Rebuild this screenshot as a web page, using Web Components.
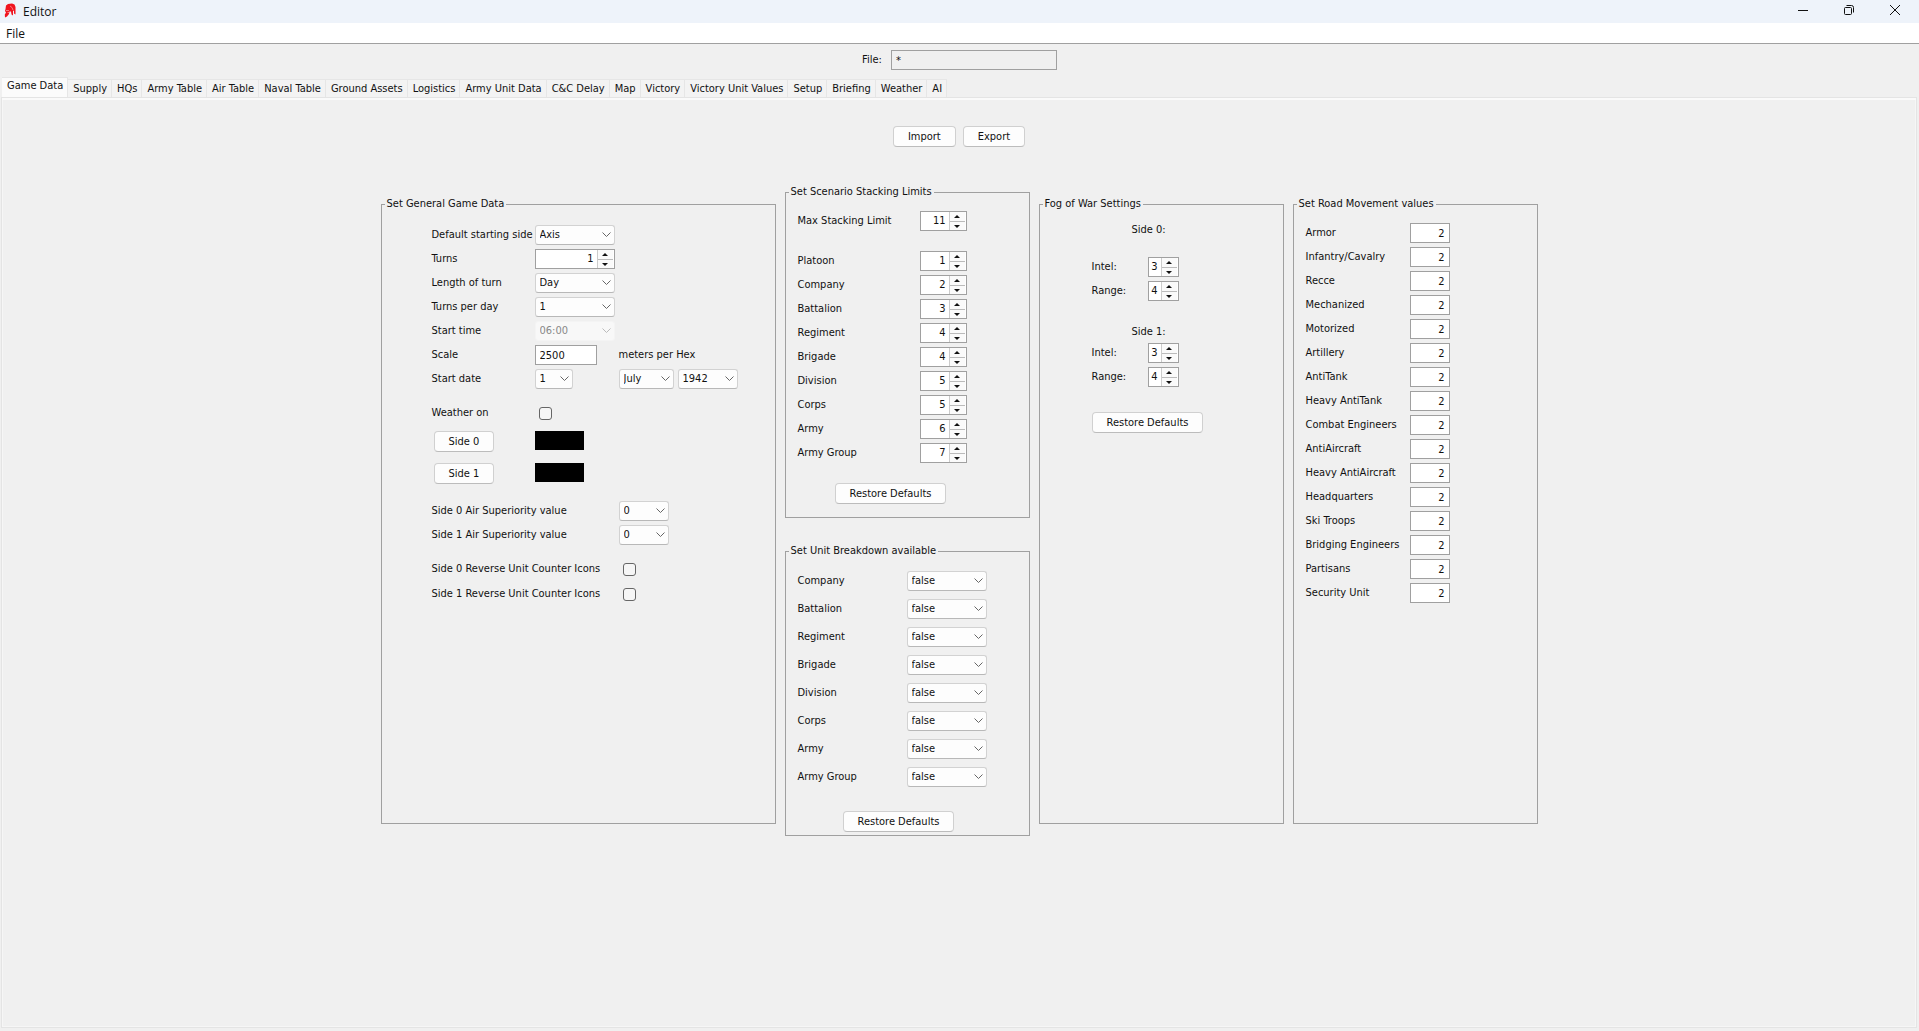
<!DOCTYPE html>
<html lang="en">
<head>
<meta charset="utf-8">
<title>Editor</title>
<style>
  html, body {
    height: 100%;
    margin: 0;
  }
  body {
    background: #f0f0f0;
    color: #111;
    font: 11px/14px "DejaVu Sans Condensed", "DejaVu Sans", sans-serif;
  }
</style>
</head>
<body>
<editor-app></editor-app>

<script>
  // Styles shared by every control
  const controlStyles = `
    *, *::before, *::after { box-sizing: border-box; }
    :host([hidden]) { display: none; }
    label {
      flex: 0 0 var(--label-width, auto);
      white-space: nowrap;
    }
    input, select, button {
      margin: 0;
      font: inherit;
      color: inherit;
      border-radius: 0;
      outline: none;
    }
    .row {
      display: flex;
      align-items: center;
      height: 20px;
    }
    .box {
      height: 20px;
      padding: 0 4px;
      border: 1px solid #a0a0a0;
      background: #fff;
    }
  `;

  // Push button
  class PushButton extends HTMLElement {
    constructor() {
      super();
      this.attachShadow({ mode: 'open' });
      this.shadowRoot.innerHTML = `
        <style>
          ${controlStyles}
          :host { display: inline-flex; }
          button {
            height: 21px;
            padding: 0 14px;
            border: 1px solid #d0d0d0;
            border-bottom-color: #bcbcbc;
            border-radius: 4px;
            background: #fdfdfd;
            white-space: nowrap;
          }
        </style>
        <button type="button"><slot></slot></button>
      `;
    }
  }
  customElements.define('push-button', PushButton);

  // Label with a drop-down, extra fields go in the slot
  class ComboField extends HTMLElement {
    constructor() {
      super();
      this.attachShadow({ mode: 'open' });
    }

    connectedCallback() {
      const label = this.getAttribute('label');
      const name = this.getAttribute('name');
      const disabled = this.hasAttribute('disabled') ? 'disabled' : '';
      const options = this.getAttribute('options').split(',');
      this.shadowRoot.innerHTML = `
        <style>
          ${controlStyles}
          :host { display: block; }
          .combo {
            display: grid;
            flex: none;
            width: var(--control-width, 80px);
          }
          .combo > * { grid-area: 1 / 1; }
          select {
            appearance: none;
            width: 100%;
            height: 20px;
            padding: 0 18px 0 4px;
            border: 1px solid #d2d2d2;
            border-bottom-color: #b8b8b8;
            border-radius: 3px;
            background: #fdfdfd;
          }
          select:disabled {
            color: #888;
            opacity: 1;
            border-color: #f4f4f4;
            background: #f8f8f8;
          }
          svg {
            place-self: center end;
            margin-right: 4px;
            fill: none;
            stroke: #666;
            pointer-events: none;
          }
          select:disabled + svg { stroke: #bbb; }
        </style>
        <div class="row">
          ${label ? `<label for="field">${label}</label>` : ''}
          <span class="combo">
            <select id="field" ${name ? `aria-label="${name}"` : ''} ${disabled}>
              ${options.map((o) => `<option>${o}</option>`).join('')}
            </select>
            <svg width="9" height="6" viewBox="0 0 9 6"><path d="M.5 .5 4.5 4.5 8.5 .5"/></svg>
          </span>
          <slot></slot>
        </div>
      `;
    }
  }
  customElements.define('combo-field', ComboField);

  // Label with a number box and up/down buttons
  class SpinnerField extends HTMLElement {
    constructor() {
      super();
      this.attachShadow({ mode: 'open' });
    }

    connectedCallback() {
      this.shadowRoot.innerHTML = `
        <style>
          ${controlStyles}
          :host { display: block; }
          .spinner {
            display: flex;
            width: var(--control-width, 47px);
            padding: 0 1px 0 0;
          }
          input {
            appearance: textfield;
            flex: 1;
            min-width: 0;
            padding: 0 3px 0 0;
            border: 0;
            background: none;
            text-align: right;
          }
          input::-webkit-inner-spin-button { display: none; }
          .arrows {
            display: grid;
            grid-template-rows: 9px 9px;
            width: 16px;
            border-left: 1px solid #ccc;
            background: #fafafa;
          }
          button {
            display: grid;
            place-items: center;
            padding: 0;
            border: 0;
            background: none;
          }
          button + button { border-top: 1px solid #bbb; }
          svg { fill: #111; }
        </style>
        <div class="row">
          <label for="field">${this.getAttribute('label')}</label>
          <span class="spinner box">
            <input id="field" type="number" value="${this.getAttribute('value')}">
            <span class="arrows">
              <button type="button" data-step="1" aria-label="Increase"><svg width="6" height="3"><path d="M3 0 6 3H0z"/></svg></button>
              <button type="button" data-step="-1" aria-label="Decrease"><svg width="6" height="3"><path d="M0 0H6L3 3z"/></svg></button>
            </span>
          </span>
        </div>
      `;

      const input = this.shadowRoot.querySelector('input');
      this.shadowRoot.querySelectorAll('button').forEach((button) => {
        button.addEventListener('click', () => {
          input.value = Number(input.value) + Number(button.dataset.step);
        });
      });
    }
  }
  customElements.define('spinner-field', SpinnerField);

  // Label with a text box
  class TextField extends HTMLElement {
    constructor() {
      super();
      this.attachShadow({ mode: 'open' });
    }

    connectedCallback() {
      const readonly = this.hasAttribute('readonly') ? 'readonly' : '';
      this.shadowRoot.innerHTML = `
        <style>
          ${controlStyles}
          :host { display: block; }
          input {
            flex: none;
            width: var(--control-width, 40px);
            text-align: var(--control-align, left);
          }
          input:read-only { background: #f0f0f0; }
        </style>
        <div class="row">
          <label for="field">${this.getAttribute('label')}</label>
          <input class="box" id="field" type="text" value="${this.getAttribute('value')}" ${readonly}>
          <slot></slot>
        </div>
      `;
    }
  }
  customElements.define('text-field', TextField);

  // Label with a tick box
  class CheckField extends HTMLElement {
    constructor() {
      super();
      this.attachShadow({ mode: 'open' });
    }

    connectedCallback() {
      this.shadowRoot.innerHTML = `
        <style>
          ${controlStyles}
          :host { display: block; }
          input {
            appearance: none;
            width: 13px;
            height: 13px;
            margin-left: 4px;
            border: 1px solid #666;
            border-radius: 3px;
            background: #f6f6f6;
          }
          input:checked { background: #0067c0; }
        </style>
        <div class="row">
          <label for="field">${this.getAttribute('label')}</label>
          <input id="field" type="checkbox">
        </div>
      `;
    }
  }
  customElements.define('check-field', CheckField);

  // Button that picks a colour, with its swatch
  class ColorField extends HTMLElement {
    constructor() {
      super();
      this.attachShadow({ mode: 'open' });
      this.shadowRoot.innerHTML = `
        <style>
          ${controlStyles}
          :host { display: flex; }
          .pick { flex: 0 0 var(--label-width); padding-left: 2px; }
          .swatch { width: 49px; height: 19px; background: #000; }
        </style>
        <span class="pick"><push-button><slot></slot></push-button></span>
        <span class="swatch"></span>
      `;
    }
  }
  customElements.define('color-field', ColorField);

  // Group with a title set into its border
  class GroupBox extends HTMLElement {
    constructor() {
      super();
      this.attachShadow({ mode: 'open' });
    }

    connectedCallback() {
      this.shadowRoot.innerHTML = `
        <style>
          :host { display: grid; }
          fieldset {
            min-width: 0;
            margin: 0;
            padding: 0;
            border: 1px solid #a0a0a0;
          }
          legend {
            margin-left: 3px;
            padding: 0 2px;
          }
          .body {
            display: flex;
            flex-direction: column;
            padding: var(--group-padding, 12px);
          }
        </style>
        <fieldset>
          <legend>${this.getAttribute('title-text')}</legend>
          <div class="body"><slot></slot></div>
        </fieldset>
      `;
    }
  }
  customElements.define('group-box', GroupBox);

  // Window title bar with its buttons
  class TitleBar extends HTMLElement {
    constructor() {
      super();
      this.attachShadow({ mode: 'open' });
      this.shadowRoot.innerHTML = `
        <style>
          :host {
            display: flex;
            align-items: flex-start;
            height: 23px;
            padding: 0 1px 0 4px;
            background: #eef3fa;
            font: 12px/16px "Open Sans", "Noto Sans", sans-serif;
          }
          .logo { margin-top: 3px; }
          .name { flex: 1; margin: 4px 0 0 7px; }
          button {
            display: grid;
            place-items: center;
            width: 46px;
            height: 20px;
            margin: 0;
            padding: 0;
            border: 0;
            background: none;
          }
          button svg { fill: none; stroke: #111; }
        </style>
        <svg class="logo" width="12" height="15" viewBox="0 0 12 15">
          <path fill="#f0141e" d="M2 2.500 4 1 8 .5 10.500 1.500 11.500 4V11.500L10 10.500V8L9 7.500V12.500L7.500 11.500 7 8.500H5.500L5 11 3 13.500 1 14.500 .8 11.500 2 9.500 1 8 1.500 6z"/>
          <path fill="none" stroke="#f9a3a8" stroke-width=".7" d="M2 7.500H5M6 3 8 4.500 9 7M3.500 9.500H5"/>
        </svg>
        <span class="name">Editor</span>
        <button type="button" aria-label="Minimize"><svg width="10" height="10"><path d="M0 5.500H10"/></svg></button>
        <button type="button" aria-label="Restore"><svg width="10" height="10"><rect x=".5" y="2.500" width="7" height="7" rx="1"/><path d="M2.500 .5H7.500Q9.500 .5 9.500 2.500V7.500"/></svg></button>
        <button type="button" aria-label="Close"><svg width="10" height="10"><path d="M0 0 10 10M10 0 0 10"/></svg></button>
      `;
    }
  }
  customElements.define('title-bar', TitleBar);

  // Row of tabs
  class TabStrip extends HTMLElement {
    constructor() {
      super();
      this.attachShadow({ mode: 'open' });
    }

    connectedCallback() {
      const tabs = this.getAttribute('tabs').split(',');
      this.shadowRoot.innerHTML = `
        <style>
          :host { display: block; }
          div {
            display: flex;
            align-items: flex-end;
            padding-left: 2px;
          }
          button {
            height: 18px;
            margin: 0;
            padding: 0 4px 0 5px;
            border: 1px solid #e6e6e6;
            border-width: 1px 1px 0 0;
            background: #f3f3f3;
            color: inherit;
            font: inherit;
            white-space: nowrap;
          }
          button[aria-selected="true"] {
            height: 20px;
            padding-bottom: 3px;
            background: #fbfbfb;
          }
        </style>
        <div role="tablist">
          ${tabs.map((t, i) => `<button type="button" role="tab" aria-selected="${i === 0}">${t}</button>`).join('')}
        </div>
      `;

      const buttons = this.shadowRoot.querySelectorAll('button');
      buttons.forEach((button) => {
        button.addEventListener('click', () => {
          buttons.forEach((b) => b.setAttribute('aria-selected', b === button));
        });
      });
    }
  }
  customElements.define('tab-strip', TabStrip);

  const stacking = [['Platoon', 1], ['Company', 2], ['Battalion', 3], ['Regiment', 4], ['Brigade', 4],
    ['Division', 5], ['Corps', 5], ['Army', 6], ['Army Group', 7]];
  const breakdown = ['Company', 'Battalion', 'Regiment', 'Brigade', 'Division', 'Corps', 'Army', 'Army Group'];
  const roads = ['Armor', 'Infantry/Cavalry', 'Recce', 'Mechanized', 'Motorized', 'Artillery', 'AntiTank',
    'Heavy AntiTank', 'Combat Engineers', 'AntiAircraft', 'Heavy AntiAircraft', 'Headquarters', 'Ski Troops',
    'Bridging Engineers', 'Partisans', 'Security Unit'];

  // The Game Data tab
  class GameDataPage extends HTMLElement {
    constructor() {
      super();
      this.attachShadow({ mode: 'open' });
      this.shadowRoot.innerHTML = `
        <style>
          :host {
            display: block;
            flex: 1;
            margin: 0 2px 3px 1px;
            padding-top: 28px;
            border: 1px solid #e4e4e4;
            box-shadow: inset 0 2px #fafafa, inset 0 0 0 1px #f6f6f6;
          }
          .actions {
            display: flex;
            justify-content: center;
            gap: 7px;
            margin-bottom: 38px;
          }
          .columns {
            display: grid;
            grid-template-columns: 395px repeat(3, 245px);
            justify-content: center;
            gap: 9px;
          }
          .side { margin: 12px 0; }
          .stack { display: flex; flex-direction: column; gap: 26px; }
          .rows { display: flex; flex-direction: column; gap: 4px; }
          .restore { align-self: flex-start; }

          .general { --group-padding: 14px 12px 12px 50px; --label-width: 103px; }
          .wide { --label-width: 187px; --control-width: 50px; }
          .second { display: flex; gap: 4px; }
          .day { --control-width: 38px; }
          .day .second { margin-left: 46px; }
          .month { --control-width: 55px; }
          .year { --control-width: 60px; }
          .scale { --control-width: 62px; }
          .scale .second { margin-left: 22px; }
          .turns { --control-width: 80px; }
          .weather { margin: 14px 0 8px; }
          .colors { display: flex; flex-direction: column; gap: 11px; margin-bottom: 17px; }
          .icons { margin-top: 14px; gap: 5px; }

          .stacking { --group-padding: 12px 12px 13px; --label-width: 122px; }
          .stacking .rows { margin: 20px 0; }
          .stacking .restore { margin-left: 37px; }
          .breakdown { --group-padding: 13px 12px 3px; --label-width: 109px; }
          .breakdown .rows { gap: 8px; margin-bottom: 24px; }
          .breakdown .restore { margin-left: 45px; }
          .fog { --group-padding: 12px 24px 12px 52px; --label-width: 56px; --control-width: 31px; }
          .fog h3 {
            margin: 0 0 20px;
            padding-left: 40px;
            font: inherit;
          }
          .fog .rows + h3 { margin: 24px 0 4px; }
          .fog .restore { margin-top: 25px; }
          .road { --group-padding: 12px; --label-width: 104px; --control-align: right; }
        </style>
        <div class="actions">
          <push-button>Import</push-button>
          <push-button>Export</push-button>
        </div>
        <div class="columns">
          <group-box class="side general" title-text="Set General Game Data">
            <div class="rows">
              <combo-field label="Default starting side" options="Axis,Allied"></combo-field>
              <spinner-field class="turns" label="Turns" value="1"></spinner-field>
              <combo-field label="Length of turn" options="Day,Week,Month"></combo-field>
              <combo-field label="Turns per day" options="1,2,4"></combo-field>
              <combo-field label="Start time" options="06:00" disabled></combo-field>
              <text-field class="scale" label="Scale" value="2500"><span class="second">meters per Hex</span></text-field>
              <combo-field class="day" label="Start date" options="1,2,3">
                <div class="second">
                  <combo-field class="month" name="Month" options="July,August"></combo-field>
                  <combo-field class="year" name="Year" options="1942,1943"></combo-field>
                </div>
              </combo-field>
            </div>
            <check-field class="weather" label="Weather on"></check-field>
            <div class="colors">
              <color-field>Side 0</color-field>
              <color-field>Side 1</color-field>
            </div>
            <div class="rows wide">
              <combo-field label="Side 0 Air Superiority value" options="0,1,2"></combo-field>
              <combo-field label="Side 1 Air Superiority value" options="0,1,2"></combo-field>
            </div>
            <div class="rows wide icons">
              <check-field label="Side 0 Reverse Unit Counter Icons"></check-field>
              <check-field label="Side 1 Reverse Unit Counter Icons"></check-field>
            </div>
          </group-box>

          <div class="stack">
            <group-box class="stacking" title-text="Set Scenario Stacking Limits">
              <spinner-field label="Max Stacking Limit" value="11"></spinner-field>
              <div class="rows">
                ${stacking.map(([name, value]) => `<spinner-field label="${name}" value="${value}"></spinner-field>`).join('')}
              </div>
              <push-button class="restore">Restore Defaults</push-button>
            </group-box>
            <group-box class="breakdown" title-text="Set Unit Breakdown available">
              <div class="rows">
                ${breakdown.map((name) => `<combo-field label="${name}" options="false,true"></combo-field>`).join('')}
              </div>
              <push-button class="restore">Restore Defaults</push-button>
            </group-box>
          </div>

          <group-box class="side fog" title-text="Fog of War Settings">
            <h3>Side 0:</h3>
            <div class="rows">
              <spinner-field label="Intel:" value="3"></spinner-field>
              <spinner-field label="Range:" value="4"></spinner-field>
            </div>
            <h3>Side 1:</h3>
            <div class="rows">
              <spinner-field label="Intel:" value="3"></spinner-field>
              <spinner-field label="Range:" value="4"></spinner-field>
            </div>
            <push-button class="restore">Restore Defaults</push-button>
          </group-box>

          <group-box class="side road" title-text="Set Road Movement values">
            <div class="rows">
              ${roads.map((name) => `<text-field label="${name}" value="2"></text-field>`).join('')}
            </div>
          </group-box>
        </div>
      `;
    }
  }
  customElements.define('game-data-page', GameDataPage);

  // The whole window
  class EditorApp extends HTMLElement {
    constructor() {
      super();
      this.attachShadow({ mode: 'open' });
      this.shadowRoot.innerHTML = `
        <style>
          :host {
            display: flex;
            flex-direction: column;
            min-height: 100%;
          }
          nav {
            display: flex;
            height: 20px;
            border-bottom: 1px solid #a0a0a0;
            background: #fff;
          }
          nav button {
            margin: 0;
            padding: 2px 6px 0;
            border: 0;
            background: none;
            color: inherit;
            font: 12px/16px "Open Sans", "Noto Sans", sans-serif;
          }
          .file {
            --label-width: 29px;
            --control-width: 166px;
            align-self: center;
            margin: 6px 0 7px;
          }
        </style>
        <title-bar></title-bar>
        <nav><button type="button">File</button></nav>
        <text-field class="file" label="File:" value="*" readonly></text-field>
        <tab-strip tabs="Game Data,Supply,HQs,Army Table,Air Table,Naval Table,Ground Assets,Logistics,Army Unit Data,C&amp;C Delay,Map,Victory,Victory Unit Values,Setup,Briefing,Weather,AI"></tab-strip>
        <game-data-page></game-data-page>
      `;
    }
  }
  customElements.define('editor-app', EditorApp);
</script>
</body>
</html>
